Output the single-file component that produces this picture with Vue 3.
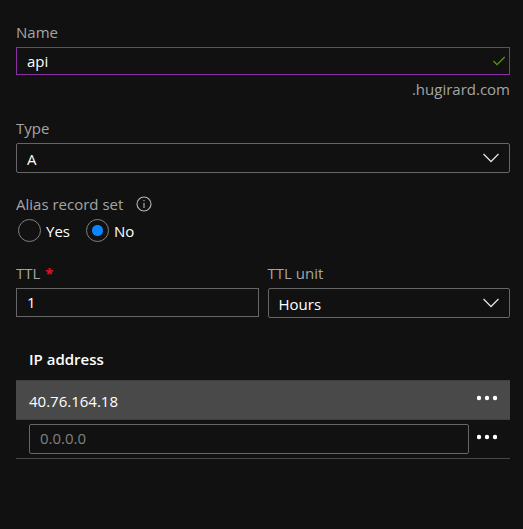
<script setup>
import { ref } from 'vue'

const name = ref('api')
const type = ref('A')
const alias = ref('no')
const ttl = ref('1')
const unit = ref('Hours')
const address = ref('')

const types = ['A', 'AAAA', 'CNAME', 'MX', 'TXT']
const units = ['Seconds', 'Minutes', 'Hours', 'Days']
const addresses = ['40.76.164.18']
</script>

<template>
  <form class="form" @submit.prevent>
    <div class="field">
      <label class="label" for="record-name">Name</label>
      <div class="control">
        <input id="record-name" v-model="name" class="box name" type="text" />
        <svg class="check" width="14" height="10" viewBox="0 0 14 10" aria-hidden="true">
          <path d="M1.5 5 L5 8.7 L12.7 1" />
        </svg>
      </div>
      <div class="suffix">.hugirard.com</div>
    </div>

    <div class="field type">
      <label class="label" for="record-type">Type</label>
      <div class="control">
        <select id="record-type" v-model="type" class="box">
          <option v-for="t in types" :key="t">{{ t }}</option>
        </select>
        <svg class="chevron" width="16" height="10" viewBox="0 0 16 10" aria-hidden="true">
          <path d="M0.5 1 L8 8.5 L15.5 1" />
        </svg>
      </div>
    </div>

    <fieldset class="field alias">
      <legend class="label legend">
        Alias record set
        <svg class="info" width="16" height="16" viewBox="0 0 16 16" aria-hidden="true">
          <circle cx="8" cy="8" r="7" />
          <path d="M8 7 V12 M8 4 V5.3" />
        </svg>
      </legend>
      <div class="radios">
        <label class="radio"><input v-model="alias" type="radio" name="alias" value="yes" />Yes</label>
        <label class="radio"><input v-model="alias" type="radio" name="alias" value="no" />No</label>
      </div>
    </fieldset>

    <div class="pair">
      <div class="field">
        <label class="label" for="ttl">TTL<span class="required">*</span></label>
        <div class="control">
          <input id="ttl" v-model="ttl" class="box ttl" type="text" required />
        </div>
      </div>
      <div class="field">
        <label class="label" for="ttl-unit">TTL unit</label>
        <div class="control">
          <select id="ttl-unit" v-model="unit" class="box">
            <option v-for="u in units" :key="u">{{ u }}</option>
          </select>
          <svg class="chevron" width="16" height="10" viewBox="0 0 16 10" aria-hidden="true">
            <path d="M0.5 1 L8 8.5 L15.5 1" />
          </svg>
        </div>
      </div>
    </div>

    <table class="records">
      <thead>
        <tr>
          <th id="ip-heading" scope="col">IP address</th>
          <td class="actions"></td>
        </tr>
      </thead>
      <tbody>
        <tr v-for="ip in addresses" :key="ip" class="saved">
          <td>{{ ip }}</td>
          <td class="actions">
            <button class="more" type="button" aria-label="More actions">
              <svg width="20" height="6" viewBox="0 0 20 6" aria-hidden="true">
                <circle cx="2" cy="3" r="2.2" /><circle cx="10" cy="3" r="2.2" /><circle cx="18" cy="3" r="2.2" />
              </svg>
            </button>
          </td>
        </tr>
        <tr class="draft">
          <td>
            <input v-model="address" class="box" type="text" placeholder="0.0.0.0" aria-labelledby="ip-heading" />
          </td>
          <td class="actions">
            <button class="more" type="button" aria-label="More actions">
              <svg width="20" height="6" viewBox="0 0 20 6" aria-hidden="true">
                <circle cx="2" cy="3" r="2.2" /><circle cx="10" cy="3" r="2.2" /><circle cx="18" cy="3" r="2.2" />
              </svg>
            </button>
          </td>
        </tr>
      </tbody>
    </table>
  </form>
</template>

<style>
body {
  background: #111111;
}
</style>

<style scoped>
.form {
  padding: 22px 13px 24px 16px;
  color: #ffffff;
  font: 15px/20px "Open Sans", "Noto Sans", sans-serif;
}

.field {
  min-width: 0;
  margin: 0;
  padding: 0;
  border: 0;
}

.label {
  display: block;
  margin-bottom: 5px;
  padding: 0;
  color: #a5a5a5;
}

.control {
  display: grid;
  position: relative;
}

.box {
  box-sizing: border-box;
  width: 100%;
  height: 30px;
  margin: 0;
  padding: 0 10px;
  border: 1px solid #666666;
  border-radius: 2px;
  outline: 0;
  background: #111111;
  color: #ffffff;
  font: inherit;
  appearance: none;
}

select.box {
  padding-top: 2px;
}

.box::placeholder {
  color: #808080;
  opacity: 1;
}

.name {
  height: 28px;
  border-color: #8a2da5;
  border-radius: 0;
}

.ttl {
  height: 29px;
  padding-bottom: 2px;
  border-radius: 0;
}

.check,
.chevron {
  position: absolute;
  top: 50%;
  transform: translateY(-50%);
  fill: none;
  pointer-events: none;
}

.check {
  right: 4px;
  stroke: #57a300;
  stroke-width: 1.2;
}

.chevron {
  right: 11px;
  stroke: #e0e0e0;
  stroke-width: 1.3;
}

.suffix {
  margin-top: 4px;
  color: #a5a5a5;
  text-align: right;
}

.type {
  margin-top: 19px;
}

.alias {
  margin-top: 21px;
}

.legend {
  display: flex;
  align-items: center;
  gap: 13px;
}

.info {
  fill: none;
  stroke: #b8b8b8;
  stroke-width: 1.1;
}

.radios {
  display: flex;
  gap: 16px;
  padding-left: 2px;
}

.radio {
  display: flex;
  align-items: center;
  gap: 5px;
}

.radio input {
  box-sizing: border-box;
  width: 23px;
  height: 23px;
  margin: 0;
  border: 1px solid #808080;
  border-radius: 50%;
  appearance: none;
}

.radio input:checked {
  background: radial-gradient(circle, #0a84ff 5px, transparent 6px);
}

.pair {
  display: grid;
  grid-template-columns: 1fr 1fr;
  gap: 9px;
  margin-top: 21px;
}

.required {
  margin-left: 5px;
  color: #e81123;
  font-weight: 700;
}

.records {
  width: 100%;
  margin-top: 22px;
  border-collapse: separate;
  border-spacing: 0;
}

.records th,
.records td {
  box-sizing: border-box;
  padding: 0 0 0 13px;
  text-align: left;
}

.records th {
  height: 40px;
  padding-bottom: 2px;
  font-weight: 600;
}

.saved td {
  height: 40px;
  padding-top: 2px;
  border: solid #404040;
  border-width: 1px 0;
  background: #494949;
}

.draft td {
  height: 39px;
  border-bottom: 1px solid #484848;
}

.draft .box {
  display: block;
  padding-bottom: 2px;
}

.records .actions {
  width: 41px;
  padding: 0 0 4px 8px;
}

.more {
  display: block;
  padding: 0;
  border: 0;
  background: none;
}

.more svg {
  display: block;
  fill: #ffffff;
}
</style>
